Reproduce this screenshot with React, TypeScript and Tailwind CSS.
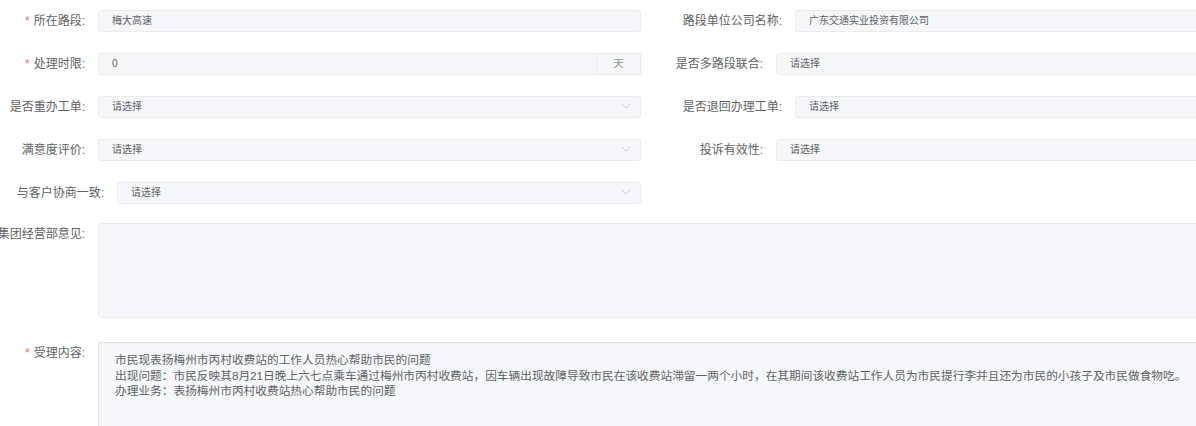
const FONT = "font-['Liberation_Sans','Noto_Sans_CJK_SC',sans-serif]";

function Chevron() {
  return (
    <svg width="10" height="6" viewBox="0 0 10 6" fill="none" className="shrink-0">
      <path d="M0.8 0.8 L5 5 L9.2 0.8" stroke="#c0c4cc" strokeWidth="0.9" />
    </svg>
  );
}

function Label({
  text,
  width,
  required,
}: {
  text: string;
  width: string;
  required?: boolean;
}) {
  return (
    <div
      className={`flex h-[22px] shrink-0 items-center justify-end whitespace-nowrap pr-[13px] text-[12px] text-[#606266] ${width}`}
    >
      {required && <span className="mr-[4px] text-[#f56c6c]">*</span>}
      {text}
    </div>
  );
}

function Field({ value, select, width }: { value: string; select?: boolean; width: string }) {
  return (
    <div
      className={`flex h-[22px] shrink-0 items-center justify-between rounded-[3px] border border-[#e9ebf0] bg-[#f5f7fa] pb-[2px] pl-[13px] pr-[9px] text-[10px] text-[#606266] ${width}`}
    >
      <span>{value}</span>
      {select && <Chevron />}
    </div>
  );
}

export default function App() {
  return (
    <div className={`h-[426px] w-[1196px] overflow-hidden bg-white ${FONT}`}>
      <div className="flex flex-col pt-[10px]">
        {/* row 1 */}
        <div className="mb-[21px] flex">
          <div className="flex w-[660px] shrink-0">
            <Label text="所在路段:" width="w-[98px]" required />
            <Field value="梅大高速" width="w-[543px]" />
          </div>
          <div className="flex shrink-0">
            <Label text="路段单位公司名称:" width="w-[135px]" />
            <Field value="广东交通实业投资有限公司" width="w-[460px]" />
          </div>
        </div>

        {/* row 2 */}
        <div className="mb-[21px] flex">
          <div className="flex w-[660px] shrink-0">
            <Label text="处理时限:" width="w-[98px]" required />
            <div className="flex h-[22px] w-[543px] shrink-0">
              <div className="flex flex-1 items-center rounded-l-[3px] border border-[#e9ebf0] bg-[#f5f7fa] pb-[2px] pl-[13px] text-[10px] text-[#606266]">
                0
              </div>
              <div className="flex w-[44px] items-center justify-center rounded-r-[3px] border border-l-0 border-[#e4e7ed] bg-[#f5f7fa] text-[10.5px] text-[#909399]">
                天
              </div>
            </div>
          </div>
          <div className="flex shrink-0">
            <Label text="是否多路段联合:" width="w-[116px]" />
            <Field value="请选择" width="w-[480px]" />
          </div>
        </div>

        {/* row 3 */}
        <div className="mb-[21px] flex">
          <div className="flex w-[660px] shrink-0">
            <Label text="是否重办工单:" width="w-[98px]" />
            <Field value="请选择" select width="w-[543px]" />
          </div>
          <div className="flex shrink-0">
            <Label text="是否退回办理工单:" width="w-[135px]" />
            <Field value="请选择" width="w-[460px]" />
          </div>
        </div>

        {/* row 4 */}
        <div className="mb-[21px] flex">
          <div className="flex w-[660px] shrink-0">
            <Label text="满意度评价:" width="w-[98px]" />
            <Field value="请选择" select width="w-[543px]" />
          </div>
          <div className="flex shrink-0">
            <Label text="投诉有效性:" width="w-[116px]" />
            <Field value="请选择" width="w-[480px]" />
          </div>
        </div>

        {/* row 5 */}
        <div className="mb-[19px] flex">
          <Label text="与客户协商一致:" width="w-[117px]" />
          <Field value="请选择" select width="w-[524px]" />
        </div>

        {/* 集团经营部意见 */}
        <div className="mb-[24px] flex">
          <Label text="集团经营部意见:" width="w-[98px]" />
          <div className="h-[95px] w-[1120px] shrink-0 rounded-[3px] border border-[#e9ebf0] bg-[#f5f7fa]" />
        </div>

        {/* 受理内容 */}
        <div className="flex">
          <Label text="受理内容:" width="w-[98px]" required />
          <div className="h-[120px] w-[1120px] shrink-0 rounded-[3px] border border-[#dcdfe6] bg-[#f5f7fa] pl-[16px] pt-[9px] text-[11.7px] leading-[15.5px] text-[#606266]">
            <div>市民现表扬梅州市丙村收费站的工作人员热心帮助市民的问题</div>
            <div>
              出现问题：市民反映其8月21日晚上六七点乘车通过梅州市丙村收费站，因车辆出现故障导致市民在该收费站滞留一两个小时，在其期间该收费站工作人员为市民提行李并且还为市民的小孩子及市民做食物吃。
            </div>
            <div>办理业务：表扬梅州市丙村收费站热心帮助市民的问题</div>
          </div>
        </div>
      </div>
    </div>
  );
}
